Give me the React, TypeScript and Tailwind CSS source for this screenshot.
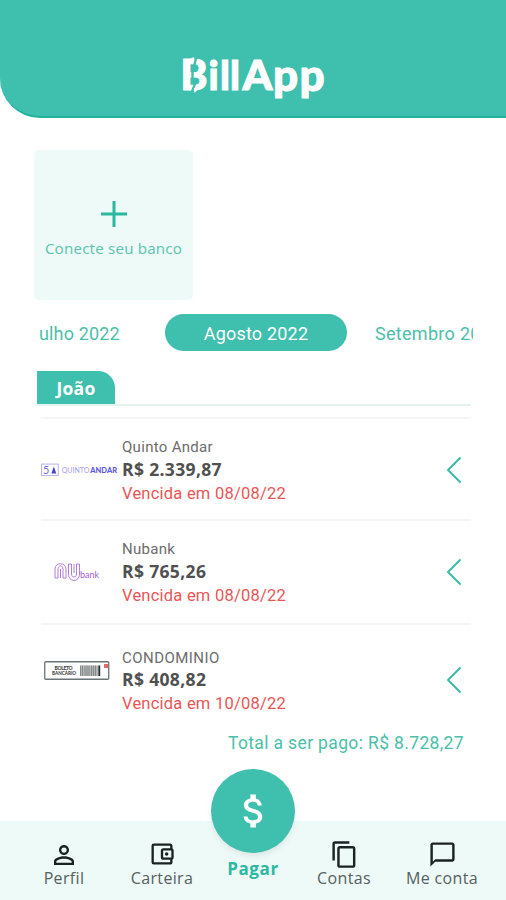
import type { ReactNode } from "react";
import {
  MdAttachMoney,
  MdChatBubbleOutline,
  MdContentCopy,
  MdOutlineAccountBalanceWallet,
  MdPersonOutline,
} from "react-icons/md";

function BillAppLogo() {
  return (
    <svg className="w-[156px] h-[60px]" viewBox="0 0 156 60" role="img">
      <g className="font-['Lato',sans-serif] font-black fill-white stroke-white stroke-1">
        <text x="5.500" y="41" textLength="27" lengthAdjust="spacingAndGlyphs" className="text-[42px]">
          B
        </text>
        <text x="33.500 45 55" y="41" className="text-[39px]">
          ill
        </text>
        <text x="67.500" y="41" className="text-[42.500px]">
          A
        </text>
        <text x="98 124.500" y="41.500" className="text-[44px]">
          pp
        </text>
      </g>
      {/* slash through the B */}
      <path
        d="M21.500 6L19.500 16L17.500 18V33L20 35L16 45"
        fill="none"
        stroke="#3fbfad"
        strokeWidth="2.400"
      />
      <path d="M13 11L19 8L18 13H13Z" fill="#fff" />
      <path d="M19 39H24L19.500 44Z" fill="#fff" />
    </svg>
  );
}

function QuintoAndarLogo() {
  return (
    <svg className="w-[77px] h-[14px] ml-[4px] shrink-0" viewBox="0 0 78 14">
      <rect x="0.500" y="1" width="17" height="11.500" fill="none" stroke="#b5b2f2" />
      <text x="2" y="11" className="font-['Lato',sans-serif] text-[11px] fill-[#6f6be0]">
        5
      </text>
      <path d="M13 3.500L15.500 10.500H10.500Z" fill="#4541d6" />
      <text
        x="21"
        y="10"
        textLength="28"
        lengthAdjust="spacingAndGlyphs"
        className="font-['Lato',sans-serif] text-[8px] fill-[#a5a2ee]"
      >
        QUINTO
      </text>
      <text
        x="50"
        y="10"
        textLength="27"
        lengthAdjust="spacingAndGlyphs"
        className="font-['Lato',sans-serif] font-black text-[8px] fill-[#5d59e0]"
      >
        ANDAR
      </text>
    </svg>
  );
}

function NubankLogo() {
  return (
    <svg className="w-[46px] h-[20px]" viewBox="0 0 46 20" fill="none">
      <g stroke="#b27bde" strokeWidth="1">
        <path d="M1 16V7C1 0 12 0 12 7V16H9V7C9 3 4 3 4 7V16Z" />
        <path d="M6.500 16V7" />
        <path d="M14.500 2H17.500V12C17.500 16 22.500 16 22.500 12V2H25.500V12C25.500 20.500 14.500 20.500 14.500 12Z" />
        <path d="M20 2V11" />
      </g>
      <text
        x="26"
        y="15.500"
        textLength="19"
        lengthAdjust="spacingAndGlyphs"
        className="font-['Lato',sans-serif] text-[9px] fill-[#a15bd4]"
      >
        bank
      </text>
    </svg>
  );
}

function BoletoLogo() {
  const bars = [36, 38, 40.5, 42.5, 44.5, 47, 49, 51];
  return (
    <svg className="w-[66px] h-[20px] mb-[18px]" viewBox="0 0 66 20">
      <rect x="0.750" y="0.750" width="64" height="17.500" rx="1" fill="#fff" stroke="#6b7476" strokeWidth="1.300" />
      <text x="10.500" y="8.500" textLength="18" className="font-['Lato',sans-serif] font-black text-[5px] fill-[#444]">
        BOLETO
      </text>
      <text
        x="8"
        y="13.500"
        textLength="24"
        lengthAdjust="spacingAndGlyphs"
        className="font-['Lato',sans-serif] font-black text-[5px] fill-[#444]"
      >
        BANCÁRIO
      </text>
      <rect x="36" y="4.500" width="20" height="10.500" fill="#b5b7b7" />
      {bars.map((x) => (
        <rect key={x} x={x} y="4.500" width="1" height="10.500" fill="#858a8a" />
      ))}
      <rect x="54.500" y="4.500" width="1.700" height="10.500" fill="#1e2b38" />
      <rect x="60" y="3" width="4" height="4" fill="#e06a64" />
    </svg>
  );
}

type BillProps = {
  logo: ReactNode;
  name: string;
  amount: string;
  due: string;
  rowClass: string;
  nameClass?: string;
};

function Bill({ logo, name, amount, due, rowClass, nameClass = "" }: BillProps) {
  return (
    <li className={`flex items-start border-t-2 border-[#f4f5f5] ${rowClass}`}>
      <div className="flex w-[81px] h-[68px] shrink-0 items-center justify-center pr-[9px]">{logo}</div>
      <div className="flex-1 font-['Roboto',sans-serif] whitespace-nowrap">
        <p className={`h-[22px] leading-[22px] text-[15px] text-[#6c6c6c] ${nameClass}`}>{name}</p>
        <p className="h-[23px] leading-[23px] text-[17.500px] tracking-[0.35px] font-bold text-[#505050] font-['Open_Sans',sans-serif]">
          {amount}
        </p>
        <p className="h-[25px] leading-[25px] text-[16.500px] text-[#ec5555] tracking-[0.23px]">{due}</p>
      </div>
      <svg className="w-4 h-7 mt-[20px] mr-[9px]" viewBox="0 0 16 28" fill="none">
        <path d="M14.500 1.500L2 14L14.500 26.500" stroke="#35baa5" strokeWidth="1.900" />
      </svg>
    </li>
  );
}

function NavItem({ icon, label, className }: { icon: ReactNode; label: string; className: string }) {
  return (
    <a className={`flex flex-col items-center text-[#1b2223] ${className}`} href="#">
      <span className="flex h-[30px] items-center justify-center">{icon}</span>
      <span className="-mt-px text-[16px] leading-[20px] tracking-[0.35px] text-[#566060] whitespace-nowrap">
        {label}
      </span>
    </a>
  );
}

export default function App() {
  return (
    <div className="flex flex-col w-[506px] h-[900px] bg-white overflow-hidden font-['Open_Sans',sans-serif]">
      <header className="flex h-[118px] shrink-0 justify-center bg-[#3fbfad] rounded-bl-[40px] border-b-2 border-[#20b49d] pt-[49px]">
        <BillAppLogo />
      </header>

      <main className="flex-1">
        <button className="flex flex-col items-center w-[159px] h-[150px] mt-8 ml-[34px] rounded-[5px] bg-[#edfaf7]">
          <svg className="w-7 h-7 mt-[50px]" viewBox="0 0 28 28">
            <path d="M14 1V27M1 14H27" stroke="#2ab8a0" strokeWidth="3" />
          </svg>
          <span className="mt-[9px] text-[15.200px] leading-[22px] tracking-[0.18px] text-[#5cc3b0] whitespace-nowrap">
            Conecte seu banco
          </span>
        </button>

        <div className="flex items-center w-[435px] h-[37px] mt-[14px] ml-[38px] overflow-hidden whitespace-nowrap font-['Roboto',sans-serif] text-[18px] text-[#4bbfaa]">
          <span className="w-[127px] shrink-0 pl-px pt-[2px] tracking-[0.15px]">ulho 2022</span>
          <span className="flex w-[182px] h-[37px] shrink-0 items-center justify-center rounded-full bg-[#3fbfad] pt-[2px] text-white tracking-[0.2px]">
            Agosto 2022
          </span>
          <span className="ml-[28px] pt-[2px] tracking-[0.3px]">Setembro 2022</span>
        </div>

        <div className="flex w-[434px] h-[35px] mt-5 ml-[37px] border-b-2 border-[#e3f3f0]">
          <span className="flex w-[78px] h-[33px] items-center justify-center rounded-tr-[17px] bg-[#3fbfad] pt-px text-[17.500px] tracking-[0.2px] font-bold text-white">
            João
          </span>
        </div>

        <ul className="w-[430px] mt-[11px] ml-[41px]">
          <Bill
            logo={<QuintoAndarLogo />}
            name="Quinto Andar"
            nameClass="tracking-[0.3px]"
            amount="R$ 2.339,87"
            due="Vencida em 08/08/22"
            rowClass="h-[102px] pt-[17px]"
          />
          <Bill
            logo={<NubankLogo />}
            name="Nubank"
            nameClass="tracking-[0.3px]"
            amount="R$ 765,26"
            due="Vencida em 08/08/22"
            rowClass="h-[104px] pt-[17px]"
          />
          <Bill
            logo={<BoletoLogo />}
            name="CONDOMINIO"
            nameClass="pt-px tracking-[0.45px]"
            amount="R$ 408,82"
            due="Vencida em 10/08/22"
            rowClass="h-[108px] pt-[21px]"
          />
        </ul>
        <p className="mr-[42px] h-6 leading-6 text-right font-['Roboto',sans-serif] text-[17.500px] tracking-[0.36px] text-[#4bbfaa]">
          Total a ser pago: R$ 8.728,27
        </p>
      </main>

      <nav className="relative flex h-[79px] shrink-0 bg-[#eefaf8] pt-[18px]">
        <NavItem icon={<MdPersonOutline size={30} className="mt-[2px]" />} label="Perfil" className="w-[128px]" />
        <NavItem
          icon={<MdOutlineAccountBalanceWallet size={28} />}
          label="Carteira"
          className="w-[68px]"
        />
        {/* raised action, overlaps the top of the bar */}
        <a
          className="absolute left-[211px] -top-[52px] flex flex-col items-center w-[84px] text-[#2bb9a2]"
          href="#"
        >
          <span className="flex w-[84px] h-[84px] items-center justify-center rounded-full bg-[#3fbfad] text-white shadow-[0_3px_6px_rgba(0,0,0,0.08)]">
            <MdAttachMoney size={44} className="ml-px" />
          </span>
          <span className="mt-[5px] text-[17px] leading-[22px] tracking-[0.6px] font-bold">Pagar</span>
        </a>
        <NavItem icon={<MdContentCopy size={29} />} label="Contas" className="ml-[114px] w-[68px]" />
        <NavItem icon={<MdChatBubbleOutline size={29} />} label="Me conta" className="ml-[24px] w-[80px]" />
      </nav>
    </div>
  );
}
